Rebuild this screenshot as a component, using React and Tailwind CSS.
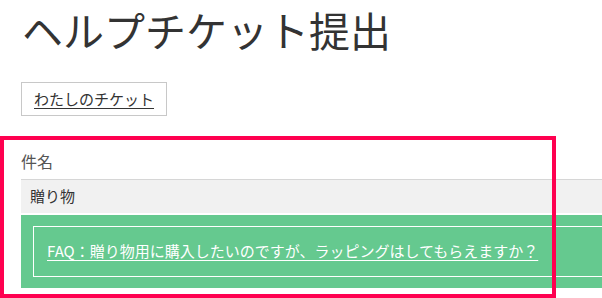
import React from 'react';

const App = () => {
    return (
        <div className="relative w-[602px] h-[298px] overflow-hidden bg-white text-[#333] font-['Noto_Sans_CJK_JP','Noto_Sans',sans-serif]">
            <div className="pl-[21px]">
                <h1 className="mt-[5px] pl-[1px] text-[41px] leading-[48px] font-normal text-[#333] whitespace-nowrap">ヘルプチケット提出</h1>

                <div className="mt-[29px] flex">
                    <a href="#" className="h-[34px] px-[12px] flex items-center border border-[#c8c8c8] text-[15px] text-[#333] underline underline-offset-[3px]">
                        わたしのチケット
                    </a>
                </div>

                <div className="mt-[34px] w-[620px]">
                    <div className="text-[16px] leading-[22px] text-[#555]">件名</div>
                    <div className="mt-[7px] h-[34px] flex items-center pl-[9px] bg-[#f1f1f1] border-t border-[#d6d6d6] text-[15px] text-[#333]">
                        贈り物
                    </div>
                    <div className="mt-[2px] bg-[#65c98f] pt-[11px] pb-[11px] pl-[12px]">
                        <div className="h-[51px] flex items-center pl-[13px] border border-white">
                            <a href="#" className="text-[15px] text-white underline underline-offset-[3px] whitespace-nowrap">
                                FAQ：贈り物用に購入したいのですが、ラッピングはしてもらえますか？
                            </a>
                        </div>
                    </div>
                </div>
            </div>

            <div className="absolute left-0 top-[136px] w-[556px] h-[162px] border-4 border-[#ff0050] pointer-events-none"></div>
        </div>
    );
};

export default App;
